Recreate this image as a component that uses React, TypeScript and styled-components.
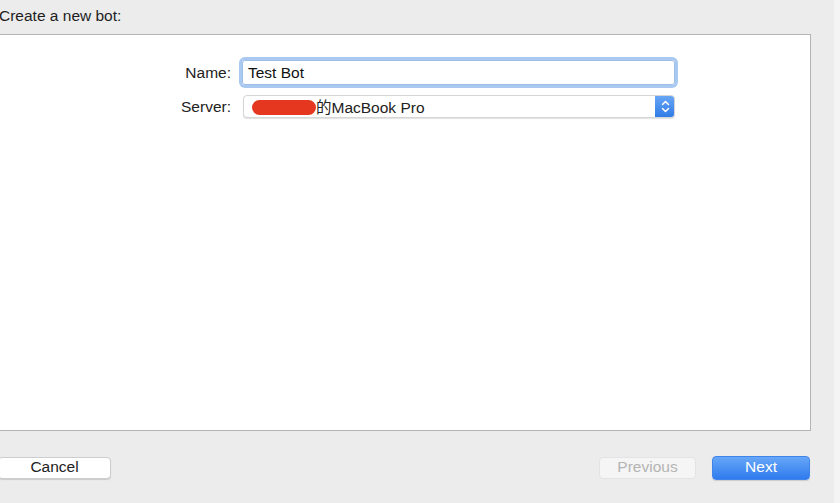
import styled, { createGlobalStyle } from 'styled-components';

const GlobalStyle = createGlobalStyle`
  html, body {
    margin: 0;
    padding: 0;
    background: #ececec;
    font-family: "Liberation Sans", Arial, "Noto Sans CJK SC", sans-serif;
    color: #222;
  }
`;

const Screen = styled.div`
  display: flex;
  width: 840px;
  height: 503px;
  overflow: hidden;
`;

const Sheet = styled.div`
  display: flex;
  flex-direction: column;
  width: 834px;
  flex-shrink: 0;
  background: #ececec;
`;

const Edge = styled.div`
  flex: 1;
  background: #f4f4f4;
`;

const Heading = styled.h1`
  margin: 0 0 0 -1px;
  height: 34px;
  display: flex;
  align-items: center;
  padding-bottom: 3px;
  box-sizing: border-box;
  font-size: 15.5px;
  font-weight: 400;
  color: #1e1e1e;
`;

const Panel = styled.section`
  margin-left: -10px;
  width: 821px;
  height: 397px;
  box-sizing: border-box;
  background: #fff;
  border: 1px solid #b4b4b4;
  border-left: none;
`;

const Form = styled.div`
  display: grid;
  grid-template-columns: 241px 433px;
  column-gap: 11px;
  row-gap: 10px;
  padding-top: 25px;
`;

const Label = styled.label`
  align-self: center;
  text-align: right;
  font-size: 15.5px;
  color: #222;
`;

const TextField = styled.div`
  height: 25px;
  box-sizing: border-box;
  display: flex;
  align-items: center;
  padding-left: 5px;
  font-size: 15.5px;
  color: #111;
  border: 1px solid #9fbfe6;
  border-radius: 3px;
  box-shadow: 0 0 0 3px #a9c9f1;
`;

const Popup = styled.div`
  height: 23px;
  margin-left: 1px;
  box-sizing: border-box;
  display: flex;
  align-items: center;
  border: 1px solid #d6d6d6;
  border-radius: 4px;
  background: #fff;
  box-shadow: 0 1px 1px rgba(0, 0, 0, 0.12);
  font-size: 15.5px;
  color: #222;
  overflow: hidden;
`;

const PopupValue = styled.div`
  flex: 1;
  display: flex;
  align-items: center;
  padding-left: 8px;
  padding-bottom: 1px;
`;

const Redaction = styled.span`
  display: inline-block;
  width: 64px;
  height: 15px;
  margin-top: 3px;
  border-radius: 8px;
  background: #e5361f;
`;

const Stepper = styled.div`
  width: 20px;
  height: 23px;
  margin: -1px -1px -1px 0;
  display: flex;
  align-items: center;
  justify-content: center;
  border-radius: 0 4px 4px 0;
  background: linear-gradient(#6aa8f6, #2d79e6);
`;

const Footer = styled.div`
  display: flex;
  align-items: center;
  margin-top: 25px;
  padding-right: 24px;
`;

const Spacer = styled.div`
  flex: 1;
`;

const Button = styled.button<{ $kind?: 'default' | 'disabled' | 'primary' }>`
  height: ${p => (p.$kind === 'primary' ? '24px' : '22px')};
  box-sizing: border-box;
  padding: 0 0 2px;
  font-family: inherit;
  font-size: 15.5px;
  border-radius: 4px;
  cursor: default;
  border: 1px solid
    ${p => (p.$kind === 'primary' ? '#3f86ec' : p.$kind === 'disabled' ? '#e3e3e3' : '#cdcdcd')};
  background: ${p =>
    p.$kind === 'primary'
      ? 'linear-gradient(#67a7f8, #2f7bee)'
      : p.$kind === 'disabled'
        ? '#f5f5f5'
        : '#fff'};
  color: ${p => (p.$kind === 'primary' ? '#fff' : p.$kind === 'disabled' ? '#b4b4b4' : '#222')};
  box-shadow: ${p => (p.$kind === 'disabled' ? 'none' : '0 1px 1px rgba(0, 0, 0, 0.14)')};
`;

const CancelButton = styled(Button)`
  width: 113px;
  margin-left: -2px;
`;

const PreviousButton = styled(Button)`
  width: 97px;
  margin-right: 16px;
`;

const NextButton = styled(Button)`
  width: 98px;
`;

function StepperIcon() {
  return (
    <svg width="9" height="15" viewBox="0 0 9 15" fill="none">
      <path d="M1.5 5.5 L4.5 2.5 L7.5 5.5" stroke="#fff" strokeWidth="1.5" strokeLinecap="round" strokeLinejoin="round" />
      <path d="M1.5 9.5 L4.5 12.5 L7.5 9.5" stroke="#fff" strokeWidth="1.5" strokeLinecap="round" strokeLinejoin="round" />
    </svg>
  );
}

export default function App() {
  return (
    <Screen>
      <GlobalStyle />
      <Sheet>
        <Heading>Create a new bot:</Heading>
        <Panel>
          <Form>
            <Label>Name:</Label>
            <TextField>Test Bot</TextField>
            <Label>Server:</Label>
            <Popup>
              <PopupValue>
                <Redaction />
                <span>的MacBook Pro</span>
              </PopupValue>
              <Stepper>
                <StepperIcon />
              </Stepper>
            </Popup>
          </Form>
        </Panel>
        <Footer>
          <CancelButton>Cancel</CancelButton>
          <Spacer />
          <PreviousButton $kind="disabled" disabled>Previous</PreviousButton>
          <NextButton $kind="primary">Next</NextButton>
        </Footer>
      </Sheet>
      <Edge />
    </Screen>
  );
}
